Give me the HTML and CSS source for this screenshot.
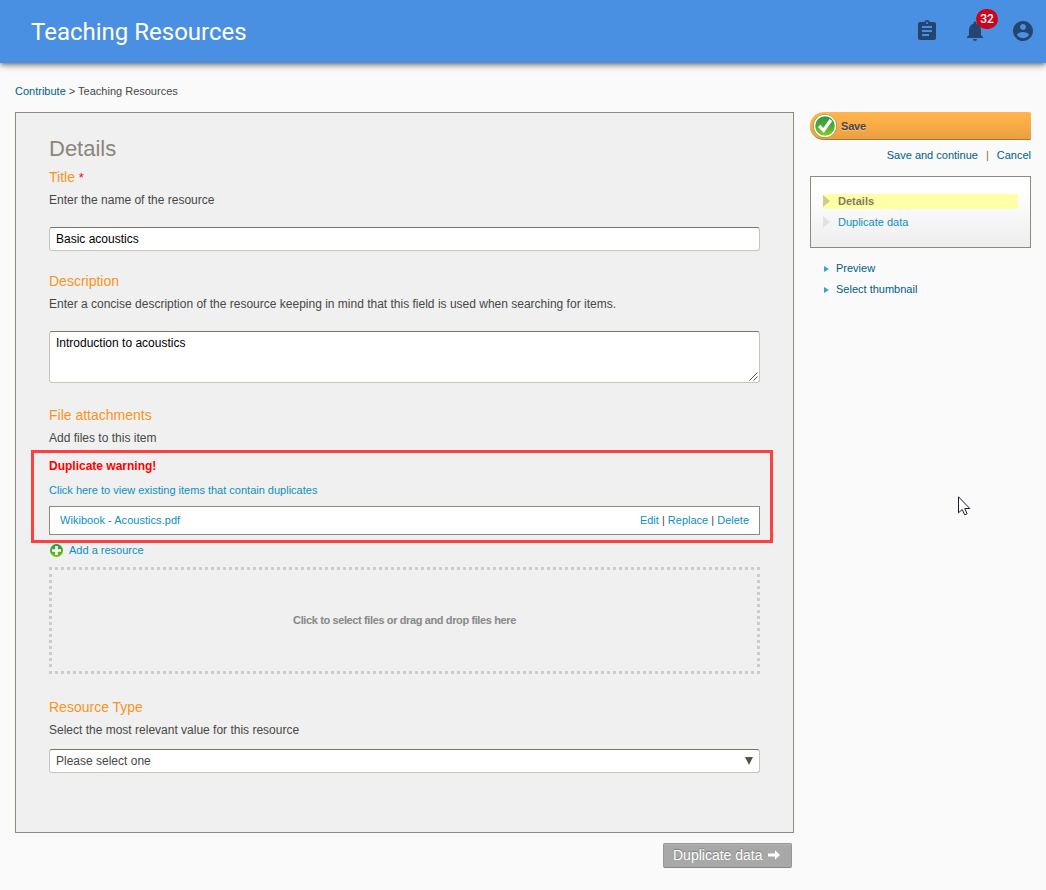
FILE: index.html
```html
<!DOCTYPE html>
<html lang="en">
<head>
<meta charset="utf-8">
<title>Teaching Resources</title>
<link rel="stylesheet" href="styles.css">
</head>
<body>
<header class="appbar">
  <h1 class="appbar-title">Teaching Resources</h1>
  <div class="appbar-icons">
    <svg class="icon" viewBox="0 0 24 24"><path d="M19 3h-4.180C14.400 1.840 13.300 1 12 1c-1.300 0-2.400.840-2.820 2H5c-1.100 0-2 .900-2 2v14c0 1.100.900 2 2 2h14c1.100 0 2-.900 2-2V5c0-1.100-.900-2-2-2zm-7 0c.550 0 1 .450 1 1s-.450 1-1 1-1-.450-1-1 .450-1 1-1zm2 14H7v-2h7v2zm3-4H7v-2h10v2zm0-4H7V7h10v2z"/></svg>
    <span class="bell">
      <svg class="icon" viewBox="0 0 24 24"><path d="M12 22c1.100 0 2-.900 2-2h-4c0 1.100.890 2 2 2zm6-6v-5c0-3.070-1.640-5.640-4.500-6.320V4c0-.830-.670-1.500-1.500-1.500s-1.500.670-1.500 1.500v.680C7.630 5.360 6 7.920 6 11v5l-2 2v1h16v-1l-2-2z"/></svg>
      <span class="badge">32</span>
    </span>
    <svg class="icon" viewBox="0 0 24 24"><path d="M12 2C6.480 2 2 6.480 2 12s4.480 10 10 10 10-4.480 10-10S17.520 2 12 2zm0 3c1.660 0 3 1.340 3 3s-1.340 3-3 3-3-1.340-3-3 1.340-3 3-3zm0 14.200c-2.500 0-4.710-1.280-6-3.220.030-1.990 4-3.080 6-3.080 1.990 0 5.970 1.090 6 3.080-1.290 1.940-3.500 3.220-6 3.220z"/></svg>
  </div>
</header>

<nav class="breadcrumb"><a>Contribute</a> &gt; Teaching Resources</nav>

<div class="columns">
  <main class="main">
    <section class="panel">
      <h2 class="heading">Details</h2>

      <div class="field">
        <h3 class="label">Title <span class="required">*</span></h3>
        <p class="help">Enter the name of the resource</p>
        <div class="control">Basic acoustics</div>
      </div>

      <div class="field field-description">
        <h3 class="label">Description</h3>
        <p class="help">Enter a concise description of the resource keeping in mind that this field is used when searching for items.</p>
        <div class="control control-area">Introduction to acoustics
          <svg class="grip" viewBox="0 0 9 9"><path d="M.5 8.500l8-8M4.500 8.500l4-4"/></svg>
        </div>
      </div>

      <div class="field field-files">
        <h3 class="label">File attachments</h3>
        <p class="help">Add files to this item</p>
        <div class="duplicates">
          <p class="warning">Duplicate warning!</p>
          <a class="dup-link">Click here to view existing items that contain duplicates</a>
          <div class="file">
            <a class="file-name">Wikibook - Acoustics.pdf</a>
            <span class="file-actions"><a>Edit</a> | <a>Replace</a> | <a>Delete</a></span>
          </div>
          <div class="annotation"></div>
        </div>
        <div class="add">
          <svg class="add-icon" viewBox="0 0 14 14">
            <defs><linearGradient id="plus" x2="0" y2="1"><stop stop-color="#1f9a45"/><stop offset="1" stop-color="#7cc000"/></linearGradient></defs>
            <circle cx="7.500" cy="7.500" r="6.500" fill="url(#plus)"/>
            <path d="M7.500 3v9M3 7.500h9" stroke="#fff" stroke-width="2.600"/>
          </svg>
          <a>Add a resource</a>
        </div>
        <div class="dropzone">Click to select files or drag and drop files here</div>
      </div>

      <div class="field field-type">
        <h3 class="label">Resource Type</h3>
        <p class="help">Select the most relevant value for this resource</p>
        <div class="control control-select">Please select one
          <svg class="caret" viewBox="0 0 8 8"><path d="M0 0h8L4 8z"/></svg>
        </div>
      </div>
    </section>
    <div class="next-row">
      <button class="next">Duplicate data
        <svg class="arrow" viewBox="0 0 12 10"><path d="M0 3.500h7V.3L12 5 7 9.700V6.500H0z"/></svg>
      </button>
    </div>
  </main>

  <aside class="side">
    <button class="save">
      <svg class="save-icon" viewBox="0 0 24 24">
        <defs><linearGradient id="tick" x2="0" y2="1"><stop stop-color="#2a9c42"/><stop offset=".5" stop-color="#4cab35"/><stop offset="1" stop-color="#8ccb1c"/></linearGradient></defs>
        <circle cx="12" cy="12" r="11.800" fill="#6f9a4a"/>
        <circle cx="12" cy="12" r="11.200" fill="#fff"/>
        <circle cx="12" cy="12" r="9.800" fill="url(#tick)"/>
        <path d="M6.200 11.800l4.400 4.700 7.300-10.500" fill="none" stroke="#fff" stroke-width="3.200"/>
      </svg>
      Save
    </button>
    <div class="side-links"><a>Save and continue</a><span class="divider">|</span><a>Cancel</a></div>
    <ul class="steps">
      <li class="step step-current">Details</li>
      <li class="step"><a>Duplicate data</a></li>
    </ul>
    <ul class="actions">
      <li class="action">Preview</li>
      <li class="action">Select thumbnail</li>
    </ul>
  </aside>
</div>

<svg class="cursor" viewBox="0 0 13 20"><path d="M.5.800v16l3.700-3.300 2.500 5.300 2.400-1-2.400-5.300h5.100z"/></svg>
</body>
</html>
```

FILE: styles.css
```css
* { box-sizing: border-box; }
body {
  margin: 0;
  height: 890px;
  overflow: hidden;
  position: relative;
  background: #fafafa;
  color: #474747;
  font: 12px/20px "Liberation Sans", Arial, sans-serif;
}
h1, h2, h3, p, ul { margin: 0; padding: 0; font-weight: 400; }
ul { list-style: none; }
a { color: #0d8fbf; }

.appbar {
  height: 63px;
  padding: 0 11px 0 31px;
  display: flex;
  align-items: center;
  justify-content: space-between;
  background: #4a90e2;
  box-shadow: 0 2px 4px -1px rgba(0,0,0,.4), 0 4px 5px rgba(0,0,0,.16), 0 1px 10px rgba(0,0,0,.14);
}
.appbar-title { color: #fff; font: 400 24px/32px Roboto, sans-serif; }
.appbar-icons { display: flex; gap: 24px; padding-bottom: 2px; }
.icon { display: block; width: 24px; height: 24px; fill: #234570; }
.bell { position: relative; }
.badge {
  position: absolute;
  left: 13px;
  top: -10px;
  width: 22px;
  height: 20px;
  border-radius: 10px;
  background: #d0021b;
  color: #fff;
  font: 500 12px/20px Roboto, sans-serif;
  text-align: center;
}

.breadcrumb { height: 49px; padding: 18px 15px 0; font-size: 11px; }
.breadcrumb a { color: #006083; }

.columns { display: flex; gap: 16px; padding: 0 15px; }
.main { width: 779px; }
.panel {
  height: 721px;
  padding: 24px 33px 0;
  background: #f0f0f0;
  border: 1px solid #8f8b7c;
}
.heading { height: 24px; margin-bottom: 5px; color: #8c857b; font-size: 22px; line-height: 24px; }
.field-description { margin-top: 19px; }
.field-files { margin-top: 21px; }
.field-type { margin-top: 22px; }
.label { height: 22px; color: #f7941d; font-size: 14px; line-height: 22px; }
.required { color: #f00; font-size: 13px; line-height: 1; }
.help { margin-top: 2px; }
.control {
  position: relative;
  height: 24px;
  margin-top: 17px;
  padding: 0 6px;
  background: #fff;
  border: 1px solid #c9c6b8;
  border-top-color: #7b7565;
  border-radius: 3px;
  color: #000;
  line-height: 22px;
}
.control-area { height: 52px; }
.control-select {
  display: flex;
  align-items: center;
  justify-content: space-between;
  margin-top: 9px;
  color: #474747;
}
.grip { position: absolute; right: 1px; bottom: 1px; width: 9px; height: 9px; fill: none; stroke: #555; }
.caret { width: 8px; height: 8px; fill: #57534c; }

.duplicates { position: relative; padding-top: 8px; font-size: 11px; }
.warning { color: #f00; font-size: 12px; font-weight: 700; }
.dup-link { display: block; margin: 4px 0 6px; }
.file {
  height: 29px;
  padding: 0 10px 1px;
  display: flex;
  align-items: center;
  justify-content: space-between;
  background: #fff;
  border: 1px solid #8f8b7c;
}
.file-name { letter-spacing: .04px; }
.annotation {
  position: absolute;
  left: -18px;
  right: -13px;
  top: 2px;
  bottom: -8px;
  border: 3px solid #ff4040;
}
.add { display: flex; align-items: center; gap: 6px; height: 20px; margin: 5px 0 7px; font-size: 11px; }
.add-icon { width: 14px; height: 14px; }
.dropzone {
  --across: repeating-linear-gradient(90deg, #ccc 0 3px, transparent 3px 6px);
  --down: repeating-linear-gradient(180deg, #ccc 0 3px, transparent 3px 6px);
  height: 107px;
  background:
    var(--across) 0 0 / 100% 3px no-repeat,
    var(--across) 0 100% / 100% 3px no-repeat,
    var(--down) 0 7px / 3px 93px no-repeat,
    var(--down) 100% 7px / 3px 93px no-repeat;
  color: #888;
  font-size: 11px;
  font-weight: 700;
  letter-spacing: -.38px;
  line-height: 107px;
  text-align: center;
}

.next-row { display: flex; justify-content: flex-end; padding: 10px 2px 0; }
.next {
  display: flex;
  align-items: center;
  gap: 5px;
  width: 129px;
  height: 25px;
  padding: 0 0 1px 9px;
  background: #a8a8a8;
  border: 1px solid #979797;
  border-bottom-color: #858585;
  border-radius: 2px;
  box-shadow: inset 0 1px #b3b3b3;
  color: #fff;
  font: 14px/22px "Liberation Sans", Arial, sans-serif;
  text-shadow: 0 -1px 1px #777;
  white-space: nowrap;
}
.arrow { width: 12px; height: 10px; fill: #fff; }

.side { width: 221px; font-size: 11px; }
.save {
  display: flex;
  align-items: center;
  gap: 4px;
  width: 221px;
  height: 28px;
  padding: 0 3px;
  border: 0;
  border-bottom: 1px solid #b0762a;
  border-radius: 14px 2px 1px 14px;
  background: linear-gradient(#ffb550, #ffaf47 25%, #eaa041);
  color: #474747;
  font: 700 11px/20px "Liberation Sans", Arial, sans-serif;
  letter-spacing: -.2px;
  text-shadow: 0 1px 1px rgba(255,255,255,.4);
}
.save-icon { width: 24px; height: 24px; }
.side-links { display: flex; justify-content: flex-end; gap: 8px; margin-top: 5px; }
.side-links a { color: #006083; }
.divider { color: #8a6a50; }
.steps {
  height: 72px;
  margin-top: 11px;
  padding: 17px 12px 0;
  background: linear-gradient(#fff 20%, #eee);
  border: 1px solid #8f8b7c;
}
.step { display: flex; align-items: center; height: 15px; margin-bottom: 6px; line-height: 15px; }
.step::before {
  content: "";
  margin: -1px 8px 0 0;
  border: 6px solid transparent;
  border-left: 7px solid #e3e2de;
  border-right: 0;
}
.step-current { background: #ffffa5; color: #827b60; font-weight: 700; }
.step-current::before { border-left-color: #cfcd88; }
.actions { padding: 9px 14px 0; }
.action { display: flex; align-items: center; height: 21px; color: #006083; }
.action::before {
  content: "";
  margin: 3px 7px 0 0;
  border: 3px solid transparent;
  border-left: 5px solid #35a5cc;
  border-right: 0;
}

.cursor { position: absolute; left: 958px; top: 496px; width: 13px; height: 20px; fill: #fff; stroke: #1c1c28; }
```
